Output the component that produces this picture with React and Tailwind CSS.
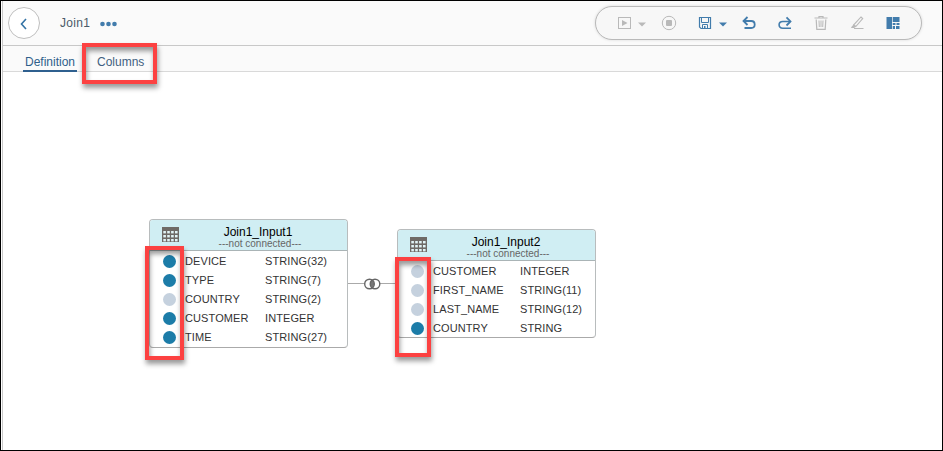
import React from 'react';

const GRAY = '#b9b9b9';
const BLUE = '#427cac';

function Caret({ color, className }) {
  return (
    <svg width="8" height="5" viewBox="0 0 8 5" className={className}>
      <path d="M0 0.5H8L4 4.5Z" fill={color} />
    </svg>
  );
}

function Icon({ children, className = '' }) {
  return (
    <svg width="16" height="16" viewBox="0 0 16 16" fill="none" className={'shrink-0 ' + className}>
      {children}
    </svg>
  );
}

function Toolbar() {
  return (
    <div className="flex h-[34px] w-[327px] items-center rounded-full border border-[#b9b9b9] bg-[#f7f7f7] pl-5 shadow-[0_0_3px_rgba(0,0,0,0.14)]">
      <Icon>
        <rect x="2.5" y="2.5" width="12" height="11" stroke={GRAY} />
        <path d="M6 5L11.5 8L6 11Z" fill={GRAY} />
      </Icon>
      <Caret color={GRAY} className="ml-[6px] mt-[3px]" />
      <Icon className="ml-[15px]">
        <circle cx="8" cy="8" r="6.7" stroke={GRAY} />
        <rect x="5" y="5" width="6" height="6" rx="1" fill={GRAY} />
      </Icon>
      <Icon className="ml-5">
        <path d="M2.5 2.5H13.5V13.5H4L2.5 12Z" stroke={BLUE} strokeWidth="1.2" />
        <path d="M4.5 2.5V7.5H11.5V2.5M5.5 13.5V9.5H10.5V13.5" stroke={BLUE} />
        <path d="M7 11H8.5V13H7Z" fill={BLUE} />
      </Icon>
      <Caret color={BLUE} className="ml-[6px] mt-[3px]" />
      <Icon className="ml-[14px]">
        <path d="M2.5 6H10.2Q13.7 6 13.7 9.5T10.2 13H3.5" stroke={BLUE} strokeWidth="1.8" />
        <path d="M6.5 2L2.5 6L6.5 10" stroke={BLUE} strokeWidth="1.8" />
      </Icon>
      <Icon className="ml-5">
        <path d="M13 6.5H5.8Q2.1 6.5 2.1 9.8T5.8 13.2H14" stroke={BLUE} strokeWidth="1.6" />
        <path d="M9.5 2.3L13.5 6.5L9.5 10.5" stroke={BLUE} strokeWidth="1.8" />
      </Icon>
      <Icon className="ml-5">
        <path d="M1.5 3H14.5M6 2.5V1.5H10V2.5M3.2 4.5L3.8 14.3H12.2L12.8 4.5" stroke={GRAY} strokeWidth="1.2" />
        <path d="M6 5.5L6.3 12M8 5.5V12M10 5.5L9.7 12" stroke={GRAY} />
      </Icon>
      <Icon className="ml-5">
        <path d="M12 2L13.7 3.5L6.8 11.5L4.8 9.8Z" stroke={GRAY} strokeWidth="1.1" />
        <path d="M4.8 9.3L7.2 11.5L5.2 13H2.2V12.2Z" fill={GRAY} />
        <path d="M5 13.5H14.5" stroke={GRAY} />
      </Icon>
      <Icon className="ml-5">
        <path d="M1.5 2H7V14H1.5ZM7.7 2H14.5V7H7.7Z" fill={BLUE} />
        <path d="M7.7 8H10.5V10H7.7ZM11.5 8H14.5V10H11.5ZM7.7 11H10V14H7.7ZM11 11H14.5V14H11Z" fill={BLUE} />
      </Icon>
    </div>
  );
}

function TableIcon() {
  return (
    <svg width="17" height="15" viewBox="0 0 17 15" className="absolute left-3 top-[7px]">
      <path d="M0 0H17V15H0Z" fill="#6e6a66" />
      <g fill="#e2f4f6">
        {[4, 8, 12].map((y) =>
          [1.3, 5.2, 9.1, 13].map((x) => <rect key={x + '-' + y} x={x} y={y} width="2.6" height="2.4" />)
        )}
      </g>
    </svg>
  );
}

function Node({ title, rows, className, nameWidth }) {
  return (
    <div className={'absolute w-[199px] rounded border border-[#b8bcbd] border-b-[#aaa] bg-white text-[#333] ' + className}>
      <div className="relative h-[31px] rounded-t-[3px] border-b border-[#aab4b6] bg-[#d0eef3] text-center">
        <TableIcon />
        <div className="pl-[19px] pt-[5px] text-xs leading-[14px] text-black">{title}</div>
        <div className="-mt-px pl-[23px] text-[10px] leading-[11px] text-[#666]">---not connected---</div>
      </div>
      <div className="pt-px text-[11px] tracking-[0.1px]">
        {rows.map(([name, type, on]) => (
          <div key={name} className="flex h-[19px] items-center">
            <span className={'ml-[13px] h-[13px] w-[13px] rounded-full ' + (on ? 'bg-[#1c7ca8]' : 'bg-[#c5d1de]')} />
            <span className={'ml-[9px] whitespace-nowrap ' + nameWidth}>{name}</span>
            <span className="whitespace-nowrap">{type}</span>
          </div>
        ))}
      </div>
    </div>
  );
}

function Highlight({ className }) {
  return (
    <div
      className={
        'absolute z-10 border-4 border-[#fc4141] shadow-[1px_4px_5px_rgba(0,0,0,0.4),inset_1px_4px_5px_rgba(0,0,0,0.4)] ' +
        className
      }
    />
  );
}

export default function App() {
  return (
    <div className="relative flex h-[451px] w-[943px] flex-col overflow-hidden border border-black bg-white font-['Liberation_Sans',Arial,sans-serif]">
      <div className="ml-px flex flex-1 flex-col border-l border-[#c9c9c9]">
        <header className="flex h-[45px] shrink-0 items-center border-b border-[#c8c8c8] bg-[#fafafa] pl-[5px] pr-5">
          <button className="flex h-8 w-8 items-center justify-center rounded-full border border-[#bfbfbf] bg-white">
            <svg width="8" height="12" viewBox="0 0 8 12" fill="none" className="mt-[2px]">
              <path d="M6 1L1.5 6L6 11" stroke="#3473a5" strokeWidth="1.6" />
            </svg>
          </button>
          <span className="ml-5 text-xs leading-4 tracking-[0.3px] text-[#4a5a68]">Join1</span>
          <svg width="18" height="6" viewBox="0 0 18 6" fill={BLUE} className="ml-[9px] mt-[2px]">
            <circle cx="3.5" cy="3" r="2.3" />
            <circle cx="9.5" cy="3" r="2.3" />
            <circle cx="15.5" cy="3" r="2.3" />
          </svg>
          <div className="ml-auto">
            <Toolbar />
          </div>
        </header>
        <nav className="flex h-[26px] shrink-0 border-b border-[#d9d9d9] bg-[#fafafa] pl-5 text-xs leading-8 text-[#3f5f7f]">
          <span className="h-[26px] w-[54px] border-b-2 border-[#2f608f] pl-[2px] text-[#2f5f8b]">Definition</span>
          <span className="ml-5">Columns</span>
        </nav>
        <main className="flex-1" />
      </div>

      <svg width="50" height="16" viewBox="0 0 50 16" fill="none" className="absolute left-[346px] top-[275px]">
        <path d="M0 7.5H18M33 7.5H50" stroke="#aaa" />
        <path d="M25.2 4A5 5 0 0 1 25.2 12A5 5 0 0 1 25.2 4Z" fill="#777" />
        <circle cx="22.5" cy="8" r="4.8" stroke="#666" strokeWidth="1.4" />
        <circle cx="28" cy="8" r="4.8" stroke="#666" strokeWidth="1.4" />
      </svg>
      <Node
        title="Join1_Input1"
        className="left-[148px] top-[218px] h-[129px]"
        nameWidth="w-[80px]"
        rows={[
          ['DEVICE', 'STRING(32)', true],
          ['TYPE', 'STRING(7)', true],
          ['COUNTRY', 'STRING(2)', false],
          ['CUSTOMER', 'INTEGER', true],
          ['TIME', 'STRING(27)', true],
        ]}
      />
      <Node
        title="Join1_Input2"
        className="left-[396px] top-[228px] h-[109px]"
        nameWidth="w-[87px]"
        rows={[
          ['CUSTOMER', 'INTEGER', false],
          ['FIRST_NAME', 'STRING(11)', false],
          ['LAST_NAME', 'STRING(12)', false],
          ['COUNTRY', 'STRING', true],
        ]}
      />

      <Highlight className="left-[81px] top-[42px] h-[41px] w-[75px]" />
      <Highlight className="left-[144px] top-[245px] h-[114px] w-[39px]" />
      <Highlight className="left-[394px] top-[256px] h-[100px] w-[36px]" />
    </div>
  );
}
